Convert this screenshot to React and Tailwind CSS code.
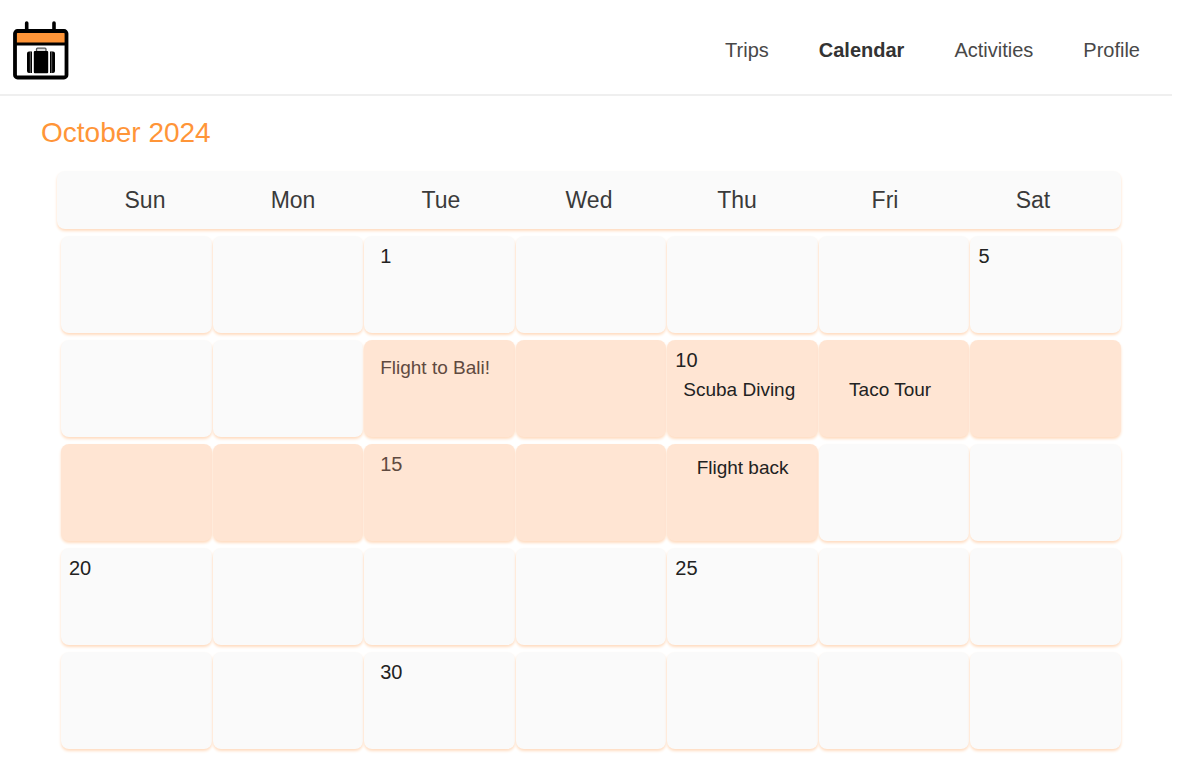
const DAYS = ["Sun", "Mon", "Tue", "Wed", "Thu", "Fri", "Sat"];

const WEEKS = [
  [{}, {}, { date: "1", pad: "px-4 pt-2" }, {}, {}, {}, { date: "5", pad: "px-2 pt-2" }],
  [
    {},
    {},
    { event: "Flight to Bali!", trip: true, pad: "px-4 pt-4", tone: "text-[#5f4a40]" },
    { trip: true },
    { date: "10", event: "Scuba Diving", trip: true, pad: "px-2 pt-2", eventPad: "px-2 pt-1.5" },
    { event: "Taco Tour", trip: true, pad: "px-2 pt-[38px]", eventPad: "pr-2 text-center" },
    { trip: true },
  ],
  [
    { trip: true },
    { trip: true },
    { date: "15", trip: true, pad: "px-4 pt-2", tone: "text-[#5f4a40]" },
    { trip: true },
    { event: "Flight back", trip: true, pad: "px-2 pt-3", eventPad: "text-center" },
    {},
    {},
  ],
  [{ date: "20", pad: "px-2 pt-2" }, {}, {}, {}, { date: "25", pad: "px-2 pt-2" }, {}, {}],
  [{}, {}, { date: "30", pad: "px-4 pt-2" }, {}, {}, {}, {}],
];

function Logo() {
  return (
    <svg width="58" height="60" viewBox="0 0 58 60" role="img" aria-label="Travel calendar">
      <path d="M14.700 3v8M42 3v8" stroke="#000" strokeWidth="3.600" strokeLinecap="round" />
      <rect x="3" y="11" width="51.500" height="46.500" rx="2.500" fill="#fff" />
      <rect x="3" y="11" width="51.500" height="12" fill="#ff9538" />
      <path d="M3 24h51.500" stroke="#000" strokeWidth="3" />
      <rect x="3" y="11" width="51.500" height="46.500" rx="2.500" fill="none" stroke="#000" strokeWidth="3.800" />
      <rect x="24.500" y="28.200" width="9.500" height="4" rx="1" fill="#ddd" stroke="#555" strokeWidth="1.300" />
      <rect x="21.800" y="31" width="14.400" height="22.300" rx="1" />
      <path d="M20 31.500v21.500h-3a2 2 0 0 1-2-2v-17.500a2 2 0 0 1 2-2zM38 31.500v21.500h3a2 2 0 0 0 2-2v-17.500a2 2 0 0 0-2-2z" />
      <path d="M18.300 32v21M39.700 32v21" stroke="#888" strokeWidth="0.700" />
    </svg>
  );
}

function DayCell({ date, event, trip, pad = "", eventPad = "", tone = "text-[#222222]" }) {
  return (
    <td
      role="cell"
      className={`block min-w-0 rounded-lg shadow-[0_2px_3px_#ffdcc0] ${trip ? "bg-[#ffe5d3]" : "bg-[#fafafa]"} ${pad} ${tone}`}
    >
      {date && <div className="text-xl leading-6">{date}</div>}
      {event && <div className={`text-[19px] leading-6 ${eventPad}`}>{event}</div>}
    </td>
  );
}

export default function App() {
  return (
    <div className="min-h-screen bg-white pb-3 font-['Liberation_Sans',Arial,sans-serif]">
      <header className="mr-2 flex items-center justify-between border-b-2 border-[#efefef] pt-5 pr-8 pb-3.5 pl-3">
        <a href="#home">
          <Logo />
        </a>
        <nav className="flex gap-[50px] text-xl leading-6 text-[#484848]">
          <a href="#trips">Trips</a>
          <a href="#calendar" aria-current="page" className="font-bold text-[#333333]">
            Calendar
          </a>
          <a href="#activities">Activities</a>
          <a href="#profile">Profile</a>
        </nav>
      </header>
      <main>
        <h1 className="pt-[19px] pl-[41px] text-[28px] leading-9 text-[#ff9538]">October 2024</h1>
        <div className="pt-5 pr-[59px] pl-[57px]">
          <table role="table" aria-label="October 2024" className="block">
            <thead role="rowgroup" className="block">
              <tr
                role="row"
                className="grid grid-cols-7 rounded-lg bg-[#fafafa] px-3.5 py-[13px] shadow-[0_2px_3px_#ffdcc0]"
              >
                {DAYS.map((day) => (
                  <th
                    key={day}
                    role="columnheader"
                    className="block text-center text-[23px] leading-8 font-normal text-[#3a3a3a]"
                  >
                    {day}
                  </th>
                ))}
              </tr>
            </thead>
            <tbody role="rowgroup" className="grid gap-[7px] pt-[7px] pl-1">
              {WEEKS.map((week, w) => (
                <tr key={w} role="row" className="grid min-h-[97px] grid-cols-7 gap-px">
                  {week.map((day, d) => (
                    <DayCell key={d} {...day} />
                  ))}
                </tr>
              ))}
            </tbody>
          </table>
        </div>
      </main>
    </div>
  );
}
